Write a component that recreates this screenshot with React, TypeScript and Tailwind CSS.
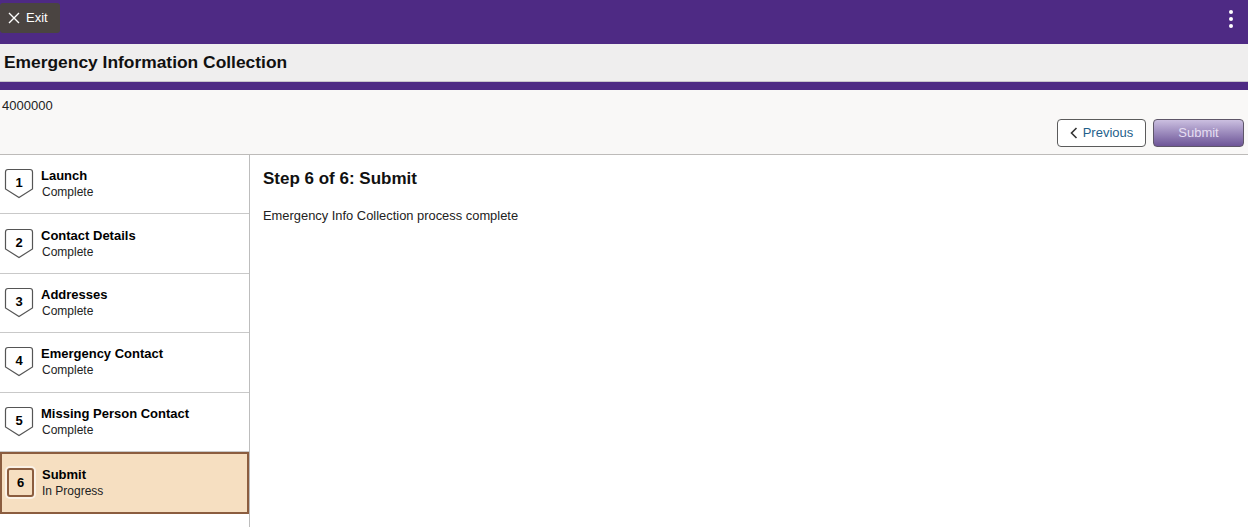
import React from "react";

const STEPS = [
  { n: 1, title: "Launch", status: "Complete" },
  { n: 2, title: "Contact Details", status: "Complete" },
  { n: 3, title: "Addresses", status: "Complete" },
  { n: 4, title: "Emergency Contact", status: "Complete" },
  { n: 5, title: "Missing Person Contact", status: "Complete" },
  { n: 6, title: "Submit", status: "In Progress", active: true },
];

function StepBadge({ n }: { n: number }) {
  return (
    <div className="relative w-[30px] h-[31px] shrink-0 -mt-[3px]">
      <svg width="30" height="31" viewBox="0 0 30 31" className="absolute inset-0">
        <path
          d="M4 1.5 H26 Q28.5 1.5 28.5 4 V21 L15 29.5 L1.5 21 V4 Q1.5 1.5 4 1.5 Z"
          fill="#ffffff"
          stroke="#555555"
          strokeWidth="1.2"
        />
      </svg>
      <span className="absolute left-0 right-0 top-[5px] text-center text-[13px] font-bold text-black">{n}</span>
    </div>
  );
}

export default function App() {
  return (
    <div className="w-[1248px] h-[527px] overflow-hidden bg-white font-['Liberation_Sans',Arial,sans-serif] text-black">
      {/* TOP BAR */}
      <div className="h-[44px] bg-[#4e2a84] flex items-start justify-between">
        <button className="mt-[3px] h-[30px] w-[60px] bg-[#4a4441] rounded-[3px] flex items-center gap-[6px] pl-[8px] text-white text-[13px]">
          <svg width="12" height="12" viewBox="0 0 12 12">
            <path d="M1 1 L11 11 M11 1 L1 11" stroke="#ffffff" strokeWidth="1.4" />
          </svg>
          Exit
        </button>
        <div className="mt-[10px] mr-[15px] flex flex-col gap-[3px]">
          <span className="w-[4px] h-[4px] rounded-full bg-white" />
          <span className="w-[4px] h-[4px] rounded-full bg-white" />
          <span className="w-[4px] h-[4px] rounded-full bg-white" />
        </div>
      </div>

      {/* TITLE */}
      <div className="h-[38px] bg-[#efeeee] flex items-center pl-[4px] border-b border-[#c8c4cc]">
        <h1 className="text-[17.4px] font-bold text-[#111]">Emergency Information Collection</h1>
      </div>
      <div className="h-[8px] bg-[#4e2a84]" />

      {/* ID + ACTIONS */}
      <div className="h-[65px] bg-[#f9f8f7] border-b border-[#bdbbb9] flex flex-col">
        <div className="pl-[2px] pt-[6px] text-[13px] text-[#222]">4000000</div>
        <div className="flex justify-end gap-[7px] pr-[4px] mt-[3px]">
          <button className="h-[28px] w-[89px] rounded-[4px] border border-[#5b5b5b] bg-white flex items-center justify-center gap-[5px] text-[13px] text-[#1f5f8b]">
            <svg width="8" height="12" viewBox="0 0 8 12">
              <path d="M6.5 1 L1.5 6 L6.5 11" fill="none" stroke="#333" strokeWidth="1.6" />
            </svg>
            Previous
          </button>
          <button className="h-[28px] w-[91px] rounded-[4px] border border-[#5e5668] bg-gradient-to-b from-[#cbbfe0] to-[#6e5597] text-[13px] text-[#e6def2]">
            Submit
          </button>
        </div>
      </div>

      {/* BODY */}
      <div className="flex h-[372px]">
        <div className="w-[250px] border-r border-[#bdbdbd] flex flex-col shrink-0">
          {STEPS.map((s) =>
            s.active ? (
              <div
                key={s.n}
                className="h-[62px] bg-[#f6dfc1] border-2 border-[#8b5d3f] flex items-center gap-[8px] pl-[4px]"
              >
                <div className="w-[27px] h-[29px] rounded-[3px] border-2 border-[#8b5d3f] bg-[#f6dfc1] shadow-[0_0_0_2px_#fbf2e6] flex items-center justify-center text-[13px] font-bold ml-[1px]">
                  {s.n}
                </div>
                <div className="flex flex-col leading-[16px]">
                  <span className="text-[13px] font-bold">{s.title}</span>
                  <span className="text-[12px] text-[#222]">{s.status}</span>
                </div>
              </div>
            ) : (
              <div key={s.n} className="h-[59.4px] border-b border-[#c9c9c9] flex items-center gap-[7px] pl-[4px] pt-[2px]">
                <StepBadge n={s.n} />
                <div className="flex flex-col leading-[16px] -mt-[2px]">
                  <span className="text-[13px] font-bold">{s.title}</span>
                  <span className="text-[12px] text-[#222] pl-[1px]">{s.status}</span>
                </div>
              </div>
            )
          )}
        </div>

        <div className="flex-1 pl-[13px] pt-[11px]">
          <h2 className="text-[17px] font-bold text-[#111]">Step 6 of 6: Submit</h2>
          <p className="mt-[14px] text-[12.9px] text-[#222]">Emergency Info Collection process complete</p>
        </div>
      </div>
    </div>
  );
}
